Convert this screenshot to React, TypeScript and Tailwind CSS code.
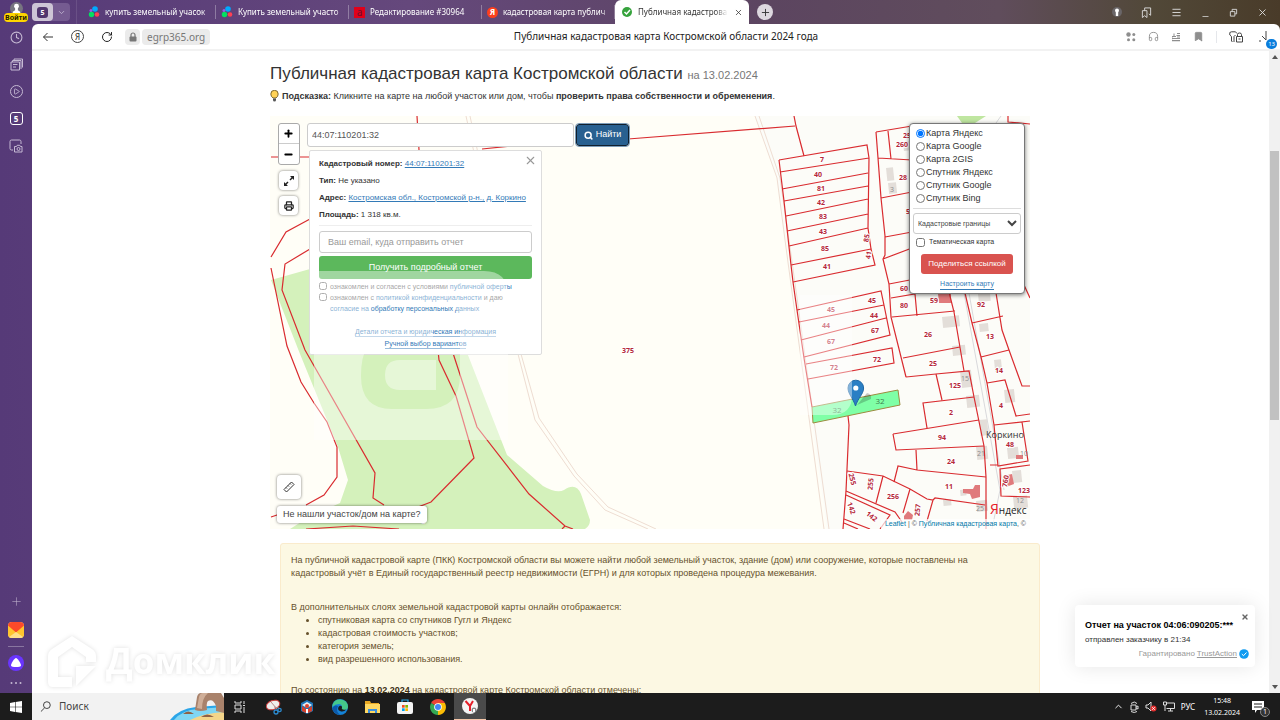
import type { ReactNode } from "react";
import {
  Bookmark,
  ChevronDown,
  ChevronUp,
  Clock,
  Headphones,
  Menu,
  Minus,
  Play,
  Plus,
  Printer,
  RotateCw,
  Search,
  X,
} from "lucide-react";

const tabs = [
  { icon: "avito", text: "купить земельный учасок" },
  { icon: "avito", text: "Купить земельный участо" },
  { icon: "red", text: "Редактирование #30964" },
  { icon: "ya", text: "кадастровая карта публич" },
];

const layers = [
  "Карта Яндекс",
  "Карта Google",
  "Карта 2GIS",
  "Спутник Яндекс",
  "Спутник Google",
  "Спутник Bing",
];

const parcels = [
  // field and forest borders
  "M417 116L419 150M271 157H310M310 219L286 232L271 257M310 249L285 264L282 290L305 350L375 473L373 498L384 505",
  "M271 268L287 346L301 382L314 403L327 422L337 447V477L324 495L306 505M271 517L280 514",
  "M438 350L439 360L456 396L474 458L431 502L418 507M452 350L477 427L529 494L565 526L573 529M565 526L562 529",
  "M306 529L353 526L399 529M482 149L530 144M628 139L795 126M794 116L796 126L804 156",
  // long strip
  "M779 160L867 145L869 158L868 228L871 249L875 265L793 282M780 172L869 158M782 189L868 173M784 201L868 186M786 216L868 199M787 231L868 214M789 246L868 228M791 265L871 249",
  "M779 160L784 201L791 265L793 282L797 310L804 358L812 407",
  "M797 310L881 291L885 310L890 335L804 357M799 322L884 305M801 340L886 318M806 364L892 348L894 363L808 379",
  // middle column
  "M876 132L912 126M876 132L878 158L881 198L885 236L885 255L883 259L889 284L891 317L906 377M888 131L891 159M878 158L912 160M881 198L912 192M885 237L912 232M883 259L912 248M889 284L915 279M891 298L915 294L917 316M892 317L955 311M949 292L954 312L964 371M903 358L960 347M906 377L936 374L969 371L974 397L984 446L986 477V529",
  "M936 374L942 400M974 397L923 403L927 428M893 434L979 420M893 434L896 450L984 446M916 450L917 470M894 482L898 466L917 470L986 477M848 416L849 425L846 491L843 529",
  "M847 471L883 476L910 489L927 499L933 500L935 498L985 505M933 500L927 521M883 476L876 503M910 489L903 513M846 491L895 512L902 522M846 495L890 515L880 529M844 519L870 529M844 523L858 529",
  // right column
  "M965 293L972 323L981 357L987 383L994 425L998 466L1028 461L1022 422M972 323L1003 316M996 293L1002 330L1009 350L1022 386H1030M981 357L1009 350M987 383L1005 380L1016 416L1030 414M994 425L1030 421M1030 465L1000 469L1001 496L1030 497M990 465H998M1024 285L1030 298M1008 116V122L1030 124",
];

const labels: [string, number, number, number?][] = [
  ["7", 822, 162], ["40", 818, 177], ["81", 821, 191], ["42", 821, 205], ["83", 823, 219],
  ["43", 823, 234], ["85", 825, 251], ["41", 827, 269], ["85", 866, 241, -80], ["41", 868, 258, -80],
  ["45", 831, 312], ["45", 872, 303], ["44", 826, 328], ["44", 874, 318], ["67", 831, 344],
  ["67", 875, 333], ["72", 834, 370], ["72", 877, 362], ["375", 628, 353], ["25", 907, 138],
  ["260", 902, 147], ["28", 903, 180], ["5", 908, 214], ["60", 904, 291], ["80", 904, 308],
  ["59", 934, 303], ["92", 981, 307], ["26", 928, 337], ["25", 933, 366], ["125", 955, 388],
  ["2", 951, 415], ["94", 942, 440], ["24", 951, 464], ["11", 949, 489], ["13", 990, 339],
  ["14", 999, 373], ["4", 1001, 408], ["48", 1010, 447], ["123", 1024, 493], ["760", 1005, 484, -80],
  ["255", 853, 482, 75], ["255", 870, 487, -85], ["256", 893, 499], ["257", 917, 513, -85],
  ["142", 852, 511, 70], ["142", 872, 519, 38], ["1", 423, 523],
];

const buildings = [
  [886, 168, 7, 13], [888, 183, 8, 11], [942, 317, 17, 11], [978, 294, 12, 8], [979, 324, 9, 8],
  [952, 346, 13, 10], [960, 371, 11, 17], [966, 396, 13, 12], [979, 420, 8, 16], [976, 447, 11, 13],
  [994, 360, 7, 12], [1004, 390, 10, 13], [1007, 448, 11, 11], [1012, 471, 9, 12], [960, 490, 6, 6],
  [943, 500, 8, 6], [976, 501, 11, 11], [1013, 497, 14, 12], [903, 142, 9, 9],
];

const reportLinks = "text-[#337ab7]";

function TabIcon({ kind }: { kind: string }) {
  if (kind === "avito") {
    return (
      <svg viewBox="0 0 12 12" className="size-3 shrink-0">
        <circle cx="3" cy="4.500" r="1.500" fill="#965eeb" />
        <circle cx="7" cy="3" r="2.800" fill="#0af" />
        <circle cx="3.500" cy="8.500" r="2.700" fill="#04e061" />
        <circle cx="9" cy="8.500" r="2.300" fill="#ff4053" />
      </svg>
    );
  }
  if (kind === "red") {
    return <span className="flex size-[11px] shrink-0 items-center justify-center bg-[#e1001a] text-[10px] leading-none text-[#6b1030]">a</span>;
  }
  return <span className="flex size-[11px] shrink-0 items-center justify-center rounded-full bg-[#fc3f1d] text-[8px] font-bold leading-none text-white">Я</span>;
}

function TabBar() {
  return (
    <header className="flex h-6 shrink-0 items-stretch text-[8px] text-white">
      <div className="relative flex w-8 shrink-0 justify-center">
        <svg viewBox="0 0 14 14" className="mt-[2px] size-[13px]">
          <circle cx="7" cy="7" r="7" fill="#777580" />
          <circle cx="7" cy="4.500" r="2.600" fill="#fff" />
          <path d="M5.500 6h3v3l2.500 1.500v3h-8v-3L5.500 9z" fill="#fff" />
        </svg>
        <button className="absolute inset-x-[4px] top-[13px] rounded-sm bg-[#ffd500] text-[7px] font-bold leading-[9px] text-[#221c00]">Войти</button>
      </div>
      <button className="my-[3px] flex w-[38px] shrink-0 items-center justify-between rounded bg-[#755b91] pr-1">
        <span className="flex h-full w-[21px] items-center justify-center rounded bg-[#cdc5d6]">
          <span className="flex size-[11px] items-center justify-center rounded-[3px] bg-[#52376f] text-[7px] font-bold leading-none">5</span>
        </span>
        <ChevronDown size={9} className="text-[#cbbfd8]" />
      </button>
      <nav className="ml-[6px] flex min-w-0 border-l border-white/10 pl-[6px]">
        {tabs.map((tab, i) => (
          <a key={i} href="#tab" className="my-[5px] flex w-[133px] items-center gap-[5px] border-r border-white/30 pl-[5px] pr-1">
            <TabIcon kind={tab.icon} />
            <span className="flex-1 overflow-hidden whitespace-nowrap [mask-image:linear-gradient(90deg,#000_92%,transparent)]">{tab.text}</span>
          </a>
        ))}
        <a href="#active" className="flex w-[134px] items-center gap-[6px] rounded-t-md bg-white pl-[7px] pr-[6px] text-[#333]">
          <svg viewBox="0 0 10 10" className="size-[10px] shrink-0">
            <circle cx="5" cy="5" r="5" fill="#36a33d" />
            <path d="M2.500 5l2 2 3.500-4" fill="none" stroke="#fff" strokeWidth="1.500" />
          </svg>
          <span className="flex-1 overflow-hidden whitespace-nowrap [mask-image:linear-gradient(90deg,#000_85%,transparent)]">Публичная кадастрова</span>
          <X size={9} className="shrink-0" />
        </a>
      </nav>
      <button aria-label="Новая вкладка" className="my-auto ml-[8px] flex size-4 items-center justify-center rounded-full bg-[#ddd8df] text-[#333]">
        <Plus size={11} />
      </button>
      <div className="ml-auto flex items-center gap-[19px] pr-[12px] text-[#ddd]">
        <svg viewBox="0 0 10 10" className="size-[10px]">
          <circle cx="5" cy="5" r="5" fill="#6a6668" />
          <circle cx="5" cy="3.500" r="2" fill="#fff" />
          <path d="M3.800 5h2.400v4H3.800z" fill="#fff" />
        </svg>
        <svg viewBox="0 0 12 12" className="size-[11px]" fill="none" stroke="currentColor">
          <path d="M1.500 4v7.500L4 9.500l2.500 2V4zM4 4V1h6.500v8l-2-1.500" />
        </svg>
        <Menu size={11} />
        <Minus size={9} className="mt-2" />
        <svg viewBox="0 0 10 10" className="size-[9px]" fill="none" stroke="currentColor">
          <path d="M1.500 4h5v5h-5zM3.500 4V1.500h5v5h-2" />
        </svg>
        <X size={11} />
      </div>
    </header>
  );
}

function Toolbar() {
  return (
    <div className="grid h-[27px] shrink-0 grid-cols-[1fr_auto_1fr] items-center rounded-t-md border-b-2 border-[#f2f2f2] bg-white pl-[10px] text-[10px] text-[#222]">
      <div className="flex items-center">
        <svg viewBox="0 0 12 12" className="size-3" fill="none" stroke="#333">
          <path d="M1.500 6H11M5.500 2l-4 4 4 4" />
        </svg>
        <span className="ml-[17px] flex size-[13px] items-center justify-center rounded-full border border-[#444] text-[8px] leading-none">Я</span>
        <RotateCw size={12} strokeWidth={2} className="ml-[17px]" />
        <span className="ml-[12px] flex h-4 w-[15px] items-center justify-center rounded bg-[#ebebeb]">
          <svg viewBox="0 0 8 10" className="h-[10px] w-2">
            <path d="M2 5V3a2 2 0 0 1 4 0v2" fill="none" stroke="#777" strokeWidth="1.200" />
            <rect x=".5" y="4.500" width="7" height="5" rx="1" fill="#777" />
          </svg>
        </span>
        <span className="ml-[2px] rounded bg-[#ebebeb] px-[5px] leading-4 text-[#777]">egrp365.org</span>
      </div>
      <p className="ml-[10px]">Публичная кадастровая карта Костромской области 2024 года</p>
      <div className="flex items-center justify-end gap-3 pr-[5px] text-[#8e8e8e]">
        <svg viewBox="0 0 10 10" className="size-[10px]" fill="currentColor">
          <circle cx="2.500" cy="2.500" r="2.200" /><circle cx="7.800" cy="2.500" r="1.500" />
          <circle cx="2.500" cy="7.800" r="1.500" /><circle cx="7.800" cy="7.800" r="1.500" />
        </svg>
        <Headphones size={11} />
        <svg viewBox="0 0 10 10" className="size-[10px]" fill="currentColor">
          <path d="M1 9V4h1.500V1.500h1V4H5v1H1.500zM1 6h8v1H1zM1 8h8v1.200H1zM6 1h3v1H6zM5.500 3H9v1H5.500zM6 4.600h3v.8H6z" />
        </svg>
        <Bookmark size={11} fill="currentColor" />
        <span className="h-3 w-px bg-gray-200" />
        <svg viewBox="0 0 14 12" className="h-3 w-[14px]" fill="none" stroke="#444">
          <path d="M3.500 11L2.500 10V5.500L.8 4V1.500L2.500.8h4L8 2.500M5 11V5.500L6.500 4M8.500 5.500V3.500Q8.500 2 10.500 2T12.500 3.500V5.500M7.500 5.500h6v5.500h-6zM9.500 8h2" />
        </svg>
        <span className="relative ml-[2px] flex h-4 w-[18px] items-center">
          <svg viewBox="0 0 14 14" className="size-[14px]" fill="none" stroke="#444">
            <path d="M9 1v9M5 6l4 4M2 11h2" />
          </svg>
          <span className="absolute -bottom-1 right-[-2px] rounded-full bg-[#0a7ddc] px-[2px] text-[6px] leading-[10px] text-white">13</span>
        </span>
      </div>
    </div>
  );
}

function Sidebar() {
  return (
    <aside className="flex w-8 shrink-0 flex-col items-center gap-[14px] pt-[7px] pb-[8px] text-[#c5b9d3]">
      <Clock size={13} />
      <svg viewBox="0 0 13 13" className="size-[13px]" fill="none" stroke="currentColor">
        <path d="M1 4h8.500v8H1zM2.500 4V2.500H11V11M4 2.500V1h8.500v8.500M3 6.500h4.500M3 9h3" />
      </svg>
      <span className="flex size-[13px] items-center justify-center rounded-full border border-current">
        <Play size={7} strokeWidth={3} />
      </span>
      <span className="flex size-[13px] items-center justify-center rounded-[3px] border border-current text-[8px] font-bold leading-none text-white">5</span>
      <svg viewBox="0 0 14 14" className="size-[14px]" fill="none" stroke="currentColor">
        <path d="M4 11H2.500Q1 11 1 9.500V2.500Q1 1 2.500 1h8Q12 1 12 2.500V5M5.500 7.500h2l.7-1.200h2.600l.7 1.200H13v5.500H5.500z" />
        <circle cx="9.500" cy="10" r="1.500" />
      </svg>
      <Plus size={13} strokeWidth={1} className="mt-auto" />
      <svg viewBox="0 0 16 16" className="size-4">
        <rect width="16" height="16" rx="4" fill="#ffe08a" />
        <path d="M0 5v-1Q0 0 4 0h8q4 0 4 4v1L8 11z" fill="#fc4a2a" />
        <path d="M0 3.500L8 10.500l8-7V12Q16 16 12 16H4Q0 16 0 12z" fill="#ffc42e" />
        <path d="M1 15L8 10l7 5q-1 1-3 1H4Q2 16 1 15z" fill="#ffe08a" />
      </svg>
      <span className="-my-[6px] h-px w-4 bg-white/30" />
      <svg viewBox="0 0 16 16" className="size-4">
        <circle cx="8" cy="8" r="8" fill="#6a35ff" />
        <path d="M8 3C9.500 3 13 8.500 13 10.500S3 12.500 3 10.500 6.500 3 8 3z" fill="#fff" />
      </svg>
      <svg viewBox="0 0 12 4" className="-mt-1 h-1 w-3 shrink-0" fill="currentColor">
        <circle cx="1.500" cy="2" r="1" /><circle cx="6" cy="2" r="1" /><circle cx="10.500" cy="2" r="1" />
      </svg>
    </aside>
  );
}

function CadastralMap() {
  return (
    <svg viewBox="270 116 760 413" preserveAspectRatio="xMinYMin slice" className="block size-full" role="img" aria-label="Кадастровая карта">
      <rect x="270" y="116" width="760" height="413" fill="#fffef7" />
      <path d="M755 116L777 178L827 529H1030V116z" fill="#fcfcf8" />
      <path d="M271 280L310 269L430 260L466 350L507 455L543 486Q557 494 564 490Q576 482 581 494L590 520Q590 526 585 529H290L309 517L340 503L348 480L338 447L300 354z" fill="#d4f1bb" />
      <path d="M957 116H986L975 123H962z" fill="#bfe6a0" />
      <g fill="none" stroke="#eeddd2" strokeWidth="1">
        <path d="M466 116L518 354L535 420L574 476L605 510L648 529M470 116L521 354L539 418L577 474L608 507L656 529" />
        <path d="M755 116L777 178L785 240L824 529M759 116L780 178L789 240L829 529" />
      </g>
      <path d="M1001 116L996 123M964 293L1000 490L992 529M969 293L1004 490" fill="none" stroke="#d9d9dc" />
      {buildings.map(([x, y, w, h]) => (
        <rect key={`${x}-${y}`} x={x} y={y} width={w} height={h} fill="#e3ded9" transform={`rotate(-6 ${x} ${y})`} />
      ))}
      <g fill="#e07a7c">
        <path d="M938 294h13v9h-12zM963 489h10l2-4h5v12l-8 2-2-5-7-1zM1003 476l9-2 2 10-8 3zM1016 455h7v4h-7zM904 516l4-5 5 4-1 5h-8z" />
      </g>
      <path d="M812 407L898 390L900 405L813 423z" fill="#7fffa6" stroke="#9c8b3f" />
      <g fill="none" stroke="#d92b2f" strokeWidth="1.200">
        {parcels.map((d) => (
          <path key={d} d={d} />
        ))}
      </g>
      <g fontFamily="Open Sans, sans-serif" fontSize="7" fontWeight="700" fill="#b5283a" stroke="#fff" strokeWidth="2" paintOrder="stroke" textAnchor="middle">
        {labels.map(([text, x, y, angle]) => (
          <text key={`${x}-${y}`} x={x} y={y} transform={angle ? `rotate(${angle} ${x} ${y - 3})` : undefined}>
            {text}
          </text>
        ))}
      </g>
      <g fontFamily="Open Sans, sans-serif" fontSize="7" fill="#8d8d8d" textAnchor="middle">
        <text x="965" y="381">15</text>
        <text x="981" y="456">21</text>
        <text x="980" y="511">25</text>
        <text x="892" y="192">3</text>
        <text x="1024" y="456">10</text>
        <text x="1020" y="503">12</text>
      </g>
      <g fontFamily="Open Sans, sans-serif" fontSize="8" fill="#3c7d4e" textAnchor="middle">
        <text x="837" y="413">32</text>
        <text x="880" y="404">32</text>
      </g>
      <text x="1005" y="438" fontFamily="Open Sans, sans-serif" fontSize="9" fill="#333" textAnchor="middle">Коркино</text>
      {/* marker with its shadow */}
      <path d="M857 405L867 393Q872 394 871 399z" fill="#000" opacity="0.200" />
      <path d="M855.500 406C853 398 848 394 848 388a7.800 7.800 0 0 1 15.600 0C863.600 394 858 398 855.500 406z" fill="#2a7fc4" stroke="#2068a6" />
      <circle cx="855.800" cy="388" r="2.600" fill="#fff" />
      <text x="990" y="514" fontFamily="Open Sans, sans-serif" fontSize="10" fill="#222"><tspan fill="#e8202a" fontSize="14">Я</tspan>ндекс</text>
    </svg>
  );
}

function MapButton({ label, children }: { label: string; children: ReactNode }) {
  return (
    <button aria-label={label} className="flex size-[19px] items-center justify-center rounded bg-white text-[#222] shadow-[0_0_3px_#0008]">
      {children}
    </button>
  );
}

function ParcelCard() {
  return (
    <section className="relative ml-[2px] mt-[3px] w-[233px] rounded-[2px] border border-[#ddd] bg-white px-[9px] pb-[5px] text-[8px] leading-[17px] text-[#333]">
      <button aria-label="Закрыть" className="absolute right-[4px] top-[3px] text-[#999]"><X size={13} strokeWidth={2} /></button>
      <div className="border-b border-[#eee] pt-[4px] pb-[2px]">
        <p><b>Кадастровый номер:</b> <a href="#n" className="text-[#337ab7] underline">44:07:110201:32</a></p>
        <p><b>Тип:</b> Не указано</p>
        <p><b>Адрес:</b> <a href="#a" className="text-[#337ab7] underline">Костромская обл., Костромской р-н., д. Коркино</a></p>
        <p><b>Площадь:</b> 1 318 кв.м.</p>
      </div>
      <form className="mt-[5px]">
        <input type="email" aria-label="Email" placeholder="Ваш email, куда отправить отчет" className="block h-[22px] w-full rounded-[3px] border border-[#ccc] px-2 text-[9px] placeholder:text-[#999]" />
        <button type="button" className="mt-[3px] block h-[23px] w-full rounded-[3px] bg-[#5cb85c] text-[9px] text-white">Получить подробный отчет</button>
        <div className="mt-[2px] grid grid-cols-[8px_1fr] gap-x-[3px] text-[7px] leading-[11px] text-[#666]">
          <input id="offer" type="checkbox" className="mt-px size-2" />
          <label htmlFor="offer">ознакомлен и согласен с условиями <a href="#o" className={reportLinks}>публичной оферты</a></label>
          <input id="policy" type="checkbox" className="mt-px size-2" />
          <label htmlFor="policy">ознакомлен с <a href="#p" className={reportLinks}>политикой конфиденциальности</a> и даю<br /><a href="#c" className={reportLinks}>согласие на обработку персональных данных</a></label>
        </div>
      </form>
      <div className="mt-[13px] flex flex-col items-center gap-[2px] text-[7px] leading-[9px] text-[#337ab7]">
        <a href="#details" className="border-b border-[#337ab7]/50">Детали отчета и юридическая информация</a>
        <a href="#manual" className="border-b border-[#337ab7]/50">Ручной выбор вариантов</a>
      </div>
    </section>
  );
}

function LayerPanel() {
  return (
    <aside className="ml-auto w-[116px] self-start rounded border border-[#777] bg-white px-[3px] pt-[3px] pb-[3px] shadow-[0_1px_4px_#0008]">
      <fieldset className="border-b border-[#ddd] pb-[3px] pl-[3px] text-[9px] leading-[13px] text-[#333]">
        {layers.map((layer, i) => (
          <label key={layer} className="flex items-center gap-px">
            <input type="radio" name="layer" defaultChecked={i === 0} className="size-[9px]" />
            {layer}
          </label>
        ))}
      </fieldset>
      <select aria-label="Слой" className="mt-[4px] h-[21px] w-full rounded-[3px] border border-[#ccc] bg-white text-[7px] text-[#444]">
        <option>Кадастровые границы</option>
      </select>
      <label className="mt-[3px] flex items-center gap-[4px] pl-[3px] text-[7px] leading-[10px] text-[#333]">
        <input type="checkbox" className="size-[9px]" />
        Тематическая карта
      </label>
      <div className="mt-[7px] flex flex-col items-center gap-[5px]">
        <button className="h-5 rounded-[3px] bg-[#d9534f] px-[7px] text-[8px] text-white">Поделиться ссылкой</button>
        <a href="#setup" className="border-b border-[#337ab7] text-[7px] leading-[10px] text-[#337ab7]">Настроить карту</a>
      </div>
    </aside>
  );
}

function MapSection() {
  return (
    <section className="relative mr-[10px] h-[413px] overflow-hidden">
      <CadastralMap />
      <div className="absolute inset-0 flex py-[7px] pl-[7px] pr-[5px]">
        <div className="flex w-[23px] flex-col items-center gap-[6px]">
          <div className="flex w-[22px] flex-col rounded-[3px] border border-[#aaa] bg-white text-black">
            <button aria-label="Приблизить" className="flex h-5 items-center justify-center border-b border-[#ccc]"><Plus size={11} strokeWidth={4} /></button>
            <button aria-label="Отдалить" className="flex h-5 items-center justify-center"><Minus size={11} strokeWidth={4} /></button>
          </div>
          <MapButton label="На весь экран">
            <svg viewBox="0 0 12 12" className="size-3" fill="currentColor">
              <path d="M11 1v4L9.500 3.500 7.500 5.500 6.500 4.500 8.500 2.500 7 1zM1 11V7l1.500 1.500L4.500 6.500 5.500 7.500 3.500 9.500 5 11z" />
            </svg>
          </MapButton>
          <MapButton label="Печать"><Printer size={10} strokeWidth={3} /></MapButton>
        </div>
        <div className="ml-[7px]">
          <form className="flex h-6 items-center gap-[2px]">
            <input aria-label="Кадастровый номер" defaultValue="44:07:110201:32" className="h-6 w-[267px] rounded-[3px] border border-[#ccc] bg-white px-[4px] text-[9px] text-[#555]" />
            <button type="button" className="flex h-[22px] w-[53px] items-center justify-center gap-[3px] rounded-[3px] border border-[#101f2d] bg-[#286090] text-[9px] text-white outline outline-[#7d9cb8]">
              <Search size={9} strokeWidth={4} />
              Найти
            </button>
          </form>
          <ParcelCard />
        </div>
        <LayerPanel />
      </div>
      <div className="absolute bottom-[6px] left-[7px] flex flex-col items-start gap-[7px]">
        <button aria-label="Линейка" className="flex size-6 items-center justify-center rounded bg-white shadow-[0_0_3px_#0008]">
          <svg viewBox="0 0 12 12" className="size-3" fill="none" stroke="#333">
            <path d="M1 8.500L8.500 1 11 3.500 3.500 11zM3 6.500l1 1M5 4.500l1 1M7 2.500l1 1" />
          </svg>
        </button>
        <button className="rounded-[3px] bg-white px-[6px] text-[9px] leading-[17px] text-[#444] shadow-[0_0_3px_#0008]">Не нашли участок/дом на карте?</button>
      </div>
      <p className="absolute bottom-0 right-0 bg-white/70 px-[4px] text-[7px] leading-[10px] text-[#555]">
        <a href="#leaflet" className="text-[#0078a8]">Leaflet</a> | © <a href="#pkk" className="text-[#0078a8]">Публичная кадастровая карта</a>, ©
      </p>
      {/* translucent agency mark over everything on the map */}
      <svg viewBox="270 116 760 413" preserveAspectRatio="xMinYMin slice" className="pointer-events-none absolute inset-0 size-full" fill="#fff" fillOpacity="0.420">
        <path fillRule="evenodd" d="M314 271H484Q508 271 508 295V440H314zM371 302H438Q460 302 460 326V375Q460 409 426 409H392Q361 409 361 376Q361 337 386 337H433V330Q433 313 420 313H371z" />
        <path d="M385 375Q385 360 400 360H436V390H400Q385 390 385 375zM800 295H852V395Q852 415 832 415H800z" />
      </svg>
    </section>
  );
}

function DomclickMark() {
  return (
    <div className="pointer-events-none absolute bottom-[6px] left-[15px] flex items-center gap-[9px] text-white [filter:drop-shadow(0_0_2px_#00000020)]">
      <svg viewBox="0 0 50 52" className="h-[52px] w-[50px]">
        <path fillRule="evenodd" fill="currentColor" d="M25 1L45 14Q49 17 49 21V27H39V22L25 12 11 22V42H25V52H6Q1 52 1 47V21Q1 17 5 14zM29 31H49L29 51z" />
      </svg>
      <span className="font-['Open_Sans',sans-serif] text-[35px] font-bold leading-[48px]">Домклик</span>
    </div>
  );
}

function Toast() {
  return (
    <section className="absolute bottom-[26px] right-[14px] w-[180px] rounded bg-white px-[10px] pt-[13px] pb-[6px] text-[8px] leading-[14px] text-[#333] shadow-[0_0_20px_#0000001a]">
      <button aria-label="Закрыть" className="absolute right-[6px] top-[8px] text-[#666]"><X size={8} strokeWidth={4} /></button>
      <b className="text-[9px] text-black">Отчет на участок 04:06:090205:***</b>
      <p>отправлен заказчику в 21:34</p>
      <p className="-mr-1 flex items-center justify-end gap-[2px] text-[#999]">
        Гарантировано <a href="#trust" className="underline">TrustAction</a>
        <svg viewBox="0 0 10 10" className="size-[10px]">
          <circle cx="5" cy="5" r="4.800" fill="#109cf1" />
          <path d="M2.800 5l1.700 1.700L7.500 3.500" fill="none" stroke="#fff" />
        </svg>
      </p>
    </section>
  );
}

function Page() {
  return (
    <main className="relative flex min-h-0 flex-1 bg-white font-['Liberation_Sans',Arial,sans-serif]">
      <div className="min-w-0 flex-1 overflow-hidden">
        <div className="mx-auto max-w-[779px] pl-[9px]">
          <h1 className="pt-[12px] text-[17px] leading-[22px] text-[#333]">
            Публичная кадастровая карта Костромской области <small className="text-[11px] text-[#777]">на 13.02.2024</small>
          </h1>
          <p className="mt-[3px] mb-[13px] flex items-center gap-[3px] text-[9px] leading-[14px] text-[#333]">
            <svg viewBox="0 0 9 12" className="h-3 w-[9px]">
              <path d="M3 8Q.800 6.500 .800 4a3.700 3.700 0 0 1 7.400 0Q8.200 6.500 6 8z" fill="#ffd257" stroke="#5c4a1a" strokeWidth=".8" />
              <path d="M3 8.500h3V10q0 1.500-1.500 1.500T3 10z" fill="#555" />
            </svg>
            <span><b>Подсказка:</b> Кликните на карте на любой участок или дом, чтобы <b>проверить права собственности и обременения</b>.</span>
          </p>
          <MapSection />
          <article className="ml-[10px] mt-[14px] rounded-[3px] border border-[#faebcc] bg-[#fcf8e3] py-[10px] pl-[10px] pr-10 text-[9px] leading-[13px] text-[#66512c]">
            <p>На публичной кадастровой карте (ПКК) Костромской области вы можете найти любой земельный участок, здание (дом) или сооружение, которые поставлены на кадастровый учёт в Единый государственный реестр недвижимости (ЕГРН) и для которых проведена процедура межевания.</p>
            <p className="mt-[21px]">В дополнительных слоях земельной кадастровой карты онлайн отображается:</p>
            <ul className="list-disc pl-[27px]">
              <li>спутниковая карта со спутников Гугл и Яндекс</li>
              <li>кадастровая стоимость участков;</li>
              <li>категория земель;</li>
              <li>вид разрешенного использования.</li>
            </ul>
            <p className="mt-[18px]">По состоянию на <b className="text-[#3d2f14]">13.02.2024</b> на кадастровой карте Костромской области отмечены:</p>
          </article>
        </div>
      </div>
      <div className="flex w-[11px] shrink-0 flex-col items-center justify-between bg-[#f1f1f1] py-1">
        <svg viewBox="0 0 6 4" className="h-1 w-[6px]"><path d="M0 4L3 0l3 4z" fill="#555" /></svg>
        <div className="mb-[174px] h-[269px] w-[9px] bg-[#c1c1c1]" />
        <svg viewBox="0 0 6 4" className="h-1 w-[6px]"><path d="M0 0l3 4 3-4z" fill="#555" /></svg>
      </div>
      <div className="pointer-events-none absolute inset-y-0 left-0 right-[11px]">
        <DomclickMark />
        <div className="pointer-events-auto"><Toast /></div>
      </div>
    </main>
  );
}

function Taskbar() {
  return (
    <footer className="flex h-[27px] shrink-0 items-stretch bg-[#1c1c1c] text-[9px] text-white">
      <button aria-label="Пуск" className="flex w-8 items-center justify-center">
        <svg viewBox="0 0 12 12" className="size-3" fill="#fff"><path d="M0 2l5-1v4.700H0zM5.600.900L12 0v5.700H5.600zM0 6.300h5V11l-5-1zM5.600 6.300H12V12l-6.400-.9z" /></svg>
      </button>
      <label className="relative flex w-48 items-center gap-[8px] bg-[#f2f2f2] pl-[8px] text-[#444]">
        <svg viewBox="0 0 12 12" className="size-[11px]" fill="none" stroke="#333">
          <circle cx="7.500" cy="4.500" r="3.700" /><path d="M5 7.500L1 11.500" />
        </svg>
        <input placeholder="Поиск" className="w-20 text-[10px] placeholder:text-[#444]" />
        <svg viewBox="0 0 54 27" className="absolute right-0 top-0 h-full w-[54px]">
          <path d="M0 27Q8 16 26 14L54 12V27z" fill="#2aa5e8" />
          <path d="M4 27Q12 17 28 16L54 14V27z" fill="#7fd6f4" />
          <path d="M20 27Q34 20 54 19V27z" fill="#f4d58a" />
          <path d="M25 17L27 4Q28 0 31 0H51L54 5V20L46 18V13Q43 5 38 8 36 10 37 17Q30 19 25 17z" fill="#a9826b" />
          <path d="M27 15L29 4q1-4 4-4h5q-6 5-6 16z" fill="#cfae98" />
          <path d="M13 21q5-5 11 0zM31 24q6-5 13 0z" fill="#8f6248" />
        </svg>
      </label>
      <div className="flex items-center">
        <span className="flex w-8 justify-center">
          <svg viewBox="0 0 12 12" className="size-3" fill="none" stroke="#ddd"><path d="M1 0v2h6V0M1 12v-2h6v2M1 4h6v4H1zM10 0v3M10 6v6M9 4.500h2" /></svg>
        </span>
        <span className="flex w-[35px] justify-center">
          <svg viewBox="0 0 16 16" className="size-4">
            <ellipse cx="7" cy="6" rx="7" ry="4.500" fill="#eee" stroke="#c83a3a" transform="rotate(-20 7 6)" />
            <path d="M5 3l6 7M8 8l5 1" stroke="#b88" />
            <circle cx="10" cy="13" r="2" fill="none" stroke="#2c8bd0" strokeWidth="1.300" /><circle cx="13.500" cy="11" r="1.700" fill="none" stroke="#2c8bd0" strokeWidth="1.300" />
          </svg>
        </span>
        <span className="flex w-8 justify-center">
          <svg viewBox="0 0 14 14" className="size-[14px]">
            <path d="M7 0l6 3v8l-6 3-6-3V3z" fill="#1e74b8" />
            <path d="M7 2l5 3-5 3-5-3z" fill="#e8eef2" /><path d="M2 6l4 3v4l-4-2zM12 6l-4 3v4l4-2z" fill="#d5402b" /><circle cx="7" cy="6" r="2" fill="#e0402a" /><path d="M6 9h2v4H6z" fill="#fff" />
          </svg>
        </span>
        <span className="flex w-[33px] justify-center">
          <svg viewBox="0 0 16 16" className="size-4">
            <circle cx="8" cy="8" r="8" fill="#1583d7" />
            <path d="M.5 6A8 8 0 0 1 16 7.500Q16 11 12 11 9 11 10 9 10.500 5 6.500 5 3 5 .5 8z" fill="#45c98a" />
            <path d="M6 7Q3 13 9 15.800A8 8 0 0 1 .2 9.500Q2 5.500 6 7z" fill="#0d59a8" />
            <path d="M9.500 7q1 1 .2 2.500.8 1.800 4.500 1-2 2.500-5 2Q5 11.500 6.500 8 8 6 9.500 7z" fill="#1c1c1c" />
          </svg>
        </span>
        <span className="flex w-8 justify-center">
          <svg viewBox="0 0 15 13" className="h-[13px] w-[15px]"><path d="M0 1h5l1 2h8v9H0z" fill="#e8a823" /><path d="M0 4h15v9H0z" fill="#ffd863" /><path d="M3 13V9h9v4H10v-2H5v2z" fill="#3c8fdc" /></svg>
        </span>
        <span className="flex w-[33px] justify-center">
          <svg viewBox="0 0 16 16" className="size-4"><path d="M5 4V1h6v3" fill="none" stroke="#2aa7e5" strokeWidth="1.200" /><rect y="3" width="16" height="12" rx="2" fill="#f4f4f4" /><path d="M5 6h2.700v2.700H5z" fill="#f25022" /><path d="M8.300 6H11v2.700H8.300z" fill="#7fba00" /><path d="M5 9.300h2.700V12H5z" fill="#00a4ef" /><path d="M8.300 9.300H11V12H8.300z" fill="#ffb900" /></svg>
        </span>
        <span className="flex w-[33px] justify-center">
          <svg viewBox="0 0 16 16" className="size-4">
            <path d="M8 8L1.100 4A8 8 0 0 1 14.900 4z" fill="#ea4335" />
            <path d="M8 8L1.100 4A8 8 0 0 0 8 16z" fill="#34a853" />
            <path d="M8 8L8 16A8 8 0 0 0 14.900 4H8z" fill="#fbbc05" />
            <circle cx="8" cy="8" r="3.800" fill="#fff" /><circle cx="8" cy="8" r="3" fill="#4285f4" />
          </svg>
        </span>
        <span className="flex h-full w-8 items-center justify-center border-b border-[#f5c6a8] bg-[#4a4a4a]">
          <svg viewBox="0 0 16 16" className="size-4"><circle cx="8" cy="8" r="8" fill="#f5f5f5" /><path d="M3.500 3L8 8v5M11 3L8 8" fill="none" stroke="#e5202a" strokeWidth="2" /><circle cx="12" cy="12" r="2.500" fill="#888" /><path d="M11 11h2v3h-2z" fill="#fff" /></svg>
        </span>
      </div>
      <div className="ml-auto flex items-center gap-[6px]">
        <ChevronUp size={11} />
        <svg viewBox="0 0 9 12" className="h-3 w-[9px]" fill="none" stroke="#ddd"><path d="M1 2.500q3.500-3 6 0M1 4h5v5H1zM6 6l2-1v3L6 7M1 10.500q3.500 2 6 0" /></svg>
        <svg viewBox="0 0 12 11" className="h-[11px] w-3"><path d="M1 4h2l3-3v9L3 7H1z" fill="none" stroke="#ddd" /><circle cx="8.500" cy="7.500" r="3" fill="#e02f2f" /><path d="M7.300 6.300l2.400 2.400M9.700 6.300L7.300 8.700" stroke="#fff" /></svg>
        <svg viewBox="0 0 12 11" className="h-[11px] w-3" fill="none" stroke="#ddd"><path d="M4 2h7.500v5.500H3.500M5 10h5M7.500 7.500V10M.5 1h3v3h-3zM2 4v6" /></svg>
        <span className="text-[8px]">РУС</span>
        <time className="ml-[3px] text-center text-[7px] leading-[12px]">15:48<br />13.02.2024</time>
        <span className="relative ml-[6px] mr-[14px] w-[14px]">
          <svg viewBox="0 0 12 12" className="size-3"><path d="M0 0h12v9H5l-2 3V9H0z" fill="#fff" /><path d="M2 3h8M2 6h8" stroke="#1c1c1c" /></svg>
          <span className="absolute -bottom-1 -right-1 size-[10px] rounded-full border border-[#888] bg-[#333] text-center text-[7px] leading-[8px]">1</span>
        </span>
      </div>
    </footer>
  );
}

export default function App() {
  return (
    <div className="flex h-screen flex-col overflow-hidden bg-[linear-gradient(90deg,#563a78_0%,#65487c_32%,#5c4560_60%,#604d5c_78%,#514838_90%,#493b29_100%)] font-['Noto_Sans',sans-serif]">
      <TabBar />
      <div className="flex min-h-0 flex-1">
        <Sidebar />
        <div className="flex min-w-0 flex-1 flex-col">
          <Toolbar />
          <Page />
        </div>
      </div>
      <Taskbar />
    </div>
  );
}
